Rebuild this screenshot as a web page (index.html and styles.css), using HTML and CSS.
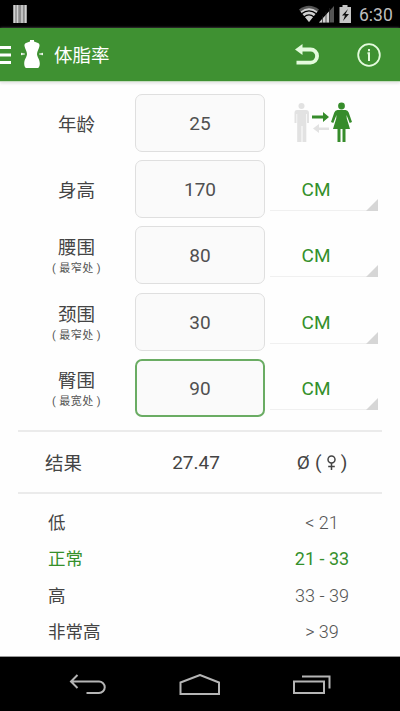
FILE: index.html
```html
<!DOCTYPE html>
<html lang="zh-CN">
<head>
	<meta charset="utf-8">
	<title>体脂率</title>
	<link rel="stylesheet" href="styles.css">
</head>
<body>
	<div class="status">
		<svg class="bars" width="14" height="18" viewBox="0 0 14 18">
			<rect width="14" height="18" fill="#8c8c8c"/>
			<path d="M1.5 0v18M4.5 0v18M9 0v18M12.5 0v18" stroke="#d2d2d2" stroke-width="1.5"/>
		</svg>
		<svg width="54" height="20" viewBox="0 0 54 20">
			<!-- wifi -->
			<path d="M0 5.500Q10 -2 20 5.500L10 18z" fill="#555"/>
			<path d="M1.500 7.500Q10 1 18.500 7.500L10 18z" fill="#d0d0d0"/>
			<path d="M2.500 9.800Q10 4 17.500 9.800M5 12.900Q10 9 15 12.900" fill="none" stroke="#000" stroke-width="1.300"/>
			<!-- signal -->
			<path d="M20 18.500L35 2v16.500z" fill="#555"/>
			<path d="M20 18.500L30 7.500v11z" fill="#d0d0d0"/>
			<path d="M23.500 12v7M27 8v11M30.500 4v15" stroke="#222" stroke-width=".7"/>
			<!-- battery -->
			<path d="M40.500 3h3V1h5v2h3.500v16H40.500z" fill="#c6c6c6"/>
			<path d="M49 5l-6 6.500h3L44 17l6-7h-3.500z" fill="#111"/>
		</svg>
		<span class="clock">6:30</span>
	</div>
	<div class="header">
		<svg class="menu" width="11" height="18" viewBox="0 0 11 18">
			<path d="M0 1.500h11M0 9h11M0 16.500h11" stroke="#fff" stroke-width="2.800"/>
		</svg>
		<svg class="logo" width="22" height="30" viewBox="0 0 22 30">
			<path d="M9 1h4v1.500l4 1.500c1.300.5 1.700 1.500 1.500 3-.4 3-2.500 5-2.500 8s2.800 5 2.800 9.500c0 2.500-.8 4-1.800 4.500H5c-1-.5-1.800-2-1.800-4.500C3.200 20 6 18 6 15s-2.100-5-2.500-8C3.300 5.500 3.700 4.500 5 4l4-1.500z" fill="#fff"/>
			<path d="M0 14l4 1-4 1zM22 14l-4 1 4 1z" fill="#fff" stroke="#fff" stroke-width=".4"/>
		</svg>
		<h1>体脂率</h1>
		<svg class="undo" width="24" height="22" viewBox="0 0 24 22">
			<path d="M6 5.500h9.500a6.600 6.600 0 0 1 0 13.200H1.500" fill="none" stroke="#e4fbdd" stroke-width="3.800"/>
			<path d="M0 5.500L7.500 0v11z" fill="#e4fbdd"/>
		</svg>
		<svg class="info" width="24" height="24" viewBox="0 0 24 24">
			<circle cx="12" cy="12" r="10.800" fill="none" stroke="#e4fbdd" stroke-width="1.800"/>
			<path d="M12 6v2.200M10.500 10.300h1.500V18" fill="none" stroke="#e4fbdd" stroke-width="2"/>
		</svg>
	</div>
	<div class="content">
		<div class="form">
			<div class="label">年龄</div>
			<div class="field">25</div>
			<div class="gender">
				<svg width="60" height="42" viewBox="0 0 60 42">
					<g fill="#e2e2e2">
						<circle cx="8.500" cy="4" r="3"/>
						<path d="M4 8h9q3 0 3 3v10h-2V12h-.7v28H9.500V24h-1v16H4.200V12h-.7v9h-2V11q0-3 2.500-3z"/>
						<path d="M36 25.500v2.500H26V31l-6-4.500 6-4.500v3.500z"/>
					</g>
					<g fill="#368c2b">
						<path d="M19 13.500v3h11V20l6-5-6-5v3.500z"/>
						<circle cx="48.500" cy="4" r="3.400"/>
						<path d="M44.500 8h8q2.300 0 3.200 2.500l3.300 9.500-2.300 1-3.200-8 .3 3.500L57 27H52.500v13h-3V27h-2v13h-3V27H40l3.200-10.500.3-3.500-3.200 8-2.300-1 3.300-9.500Q42.200 8 44.500 8z"/>
					</g>
				</svg>
			</div>

			<div class="label">身高</div>
			<div class="field">170</div>
			<div class="unit">CM</div>

			<div class="label">腰围<small>(&nbsp;最窄处&nbsp;)</small></div>
			<div class="field">80</div>
			<div class="unit">CM</div>

			<div class="label">颈围<small>(&nbsp;最窄处&nbsp;)</small></div>
			<div class="field">30</div>
			<div class="unit">CM</div>

			<div class="label">臀围<small>(&nbsp;最宽处&nbsp;)</small></div>
			<div class="field active">90</div>
			<div class="unit">CM</div>
		</div>
		<div class="result">
			<span class="name">结果</span>
			<span class="value">27.47</span>
			<span class="sex">Ø (
				<svg width="9" height="15" viewBox="0 0 9 15">
					<circle cx="4.500" cy="4.500" r="3.500"/>
					<path d="M4.500 8v7M1.200 11.500h6.600"/>
				</svg>
			)</span>
		</div>
		<div class="ranges">
			<div class="range"><span>低</span><b>&lt; 21</b></div>
			<div class="range current"><span>正常</span><b>21 - 33</b></div>
			<div class="range"><span>高</span><b>33 - 39</b></div>
			<div class="range"><span>非常高</span><b>&gt; 39</b></div>
		</div>
	</div>
	<div class="nav">
		<svg width="38" height="22" viewBox="0 0 38 22">
			<path d="M8.500 1L2 7.500 8.500 14M2 7.500h28a5.700 5.700 0 0 1 0 11.500H17.500"/>
		</svg>
		<svg width="42" height="22" viewBox="0 0 42 22">
			<path d="M1.500 20V8.500L21 1l19 7.500V20z"/>
		</svg>
		<svg width="38" height="22" viewBox="0 0 38 22">
			<path d="M1 7.500h30V19H1zM9 2.500h27.500v12"/>
		</svg>
	</div>
</body>
</html>
```
FILE: styles.css
```css
body {
	margin: 0;
	height: 711px;
	display: flex;
	flex-direction: column;
	overflow: hidden;
	background: #fefefe;
	color: #444;
	font-family: Roboto, "Noto Sans CJK SC", sans-serif;
}
svg {
	display: block;
	flex: none;
}
.status {
	height: 28px;
	display: flex;
	align-items: center;
	background: #000;
}
.bars {
	margin: 0 auto 0 13px;
}
.clock {
	width: 34px;
	margin: 1px 7px 0 6px;
	color: #bdbdbd;
	font-size: 17.5px;
	white-space: nowrap;
}
.header {
	height: 53px;
	display: flex;
	align-items: center;
	background: #3f9132;
	border-bottom: 1px solid #c5dcc0;
	box-shadow: 0 1px 3px #ddd;
}
.logo {
	margin: -2px 0 0 10px;
}
h1 {
	margin: -2px auto 0 11px;
	color: #fff;
	font-size: 18.5px;
	font-weight: 400;
}
.info {
	margin: 0 19px 0 38px;
}
.content {
	flex: 1;
	padding: 12px 18px 0;
}
.form {
	display: grid;
	grid-template-columns: 117px 130px 113px;
	grid-auto-rows: 58px;
	row-gap: 8.2px;
	height: 336px;
	box-sizing: border-box;
}
.label {
	display: flex;
	flex-direction: column;
	justify-content: center;
	padding-top: 4px;
	text-align: center;
	font-size: 18.5px;
	line-height: 22px;
}
.label small {
	padding-top: 1px;
	font-size: 11px;
	line-height: 17px;
	letter-spacing: .4px;
	color: #555;
}
.field {
	box-sizing: border-box;
	border: 1px solid #dfdfdf;
	border-radius: 7px;
	background: #fafafa;
	text-align: center;
	font-size: 19px;
	line-height: 58px;
	color: #505050;
}
.active {
	border: 2px solid #6aac63;
	line-height: 56px;
}
.gender {
	padding: 8px 0 0 28px;
}
.unit {
	position: relative;
	height: 50px;
	margin-left: 5px;
	padding-right: 16px;
	border-bottom: 1px solid #f0f0f0;
	text-align: center;
	font-size: 19px;
	line-height: 59px;
	color: #35902b;
}
.unit::after {
	content: "";
	position: absolute;
	right: 0;
	bottom: -1px;
	border: 6.5px solid;
	border-color: transparent #d6d6d6 #d6d6d6 transparent;
}
.result {
	display: grid;
	grid-template-columns: 117px 122px 1fr;
	height: 60px;
	border-top: 2px solid #ebebeb;
	border-bottom: 2px solid #ebebeb;
	font-size: 19px;
	line-height: 62px;
	text-align: center;
}
.name {
	text-align: left;
	padding: 1px 0 0 27px;
	font-size: 18.5px;
}
.sex {
	padding-left: 5px;
	word-spacing: .4px;
}
.sex svg {
	display: inline-block;
	vertical-align: -1px;
	fill: none;
	stroke: #444;
	stroke-width: 1.5;
}
.ranges {
	padding: 11px 17px 0 30px;
}
.range {
	display: flex;
	justify-content: space-between;
	font-size: 17.5px;
	line-height: 36.4px;
}
.range b {
	width: 86px;
	text-align: center;
	font-size: 18px;
	font-weight: 300;
	color: #555;
}
.current, .current b {
	color: #35902b;
	font-weight: 400;
}
.nav {
	height: 52px;
	padding-top: 2px;
	display: flex;
	justify-content: center;
	align-items: center;
	gap: 72px;
	background: #000;
	box-shadow: 0 -1px #999;
}
.nav svg {
	fill: none;
	stroke: #b5b5b5;
	stroke-width: 2;
}
```
